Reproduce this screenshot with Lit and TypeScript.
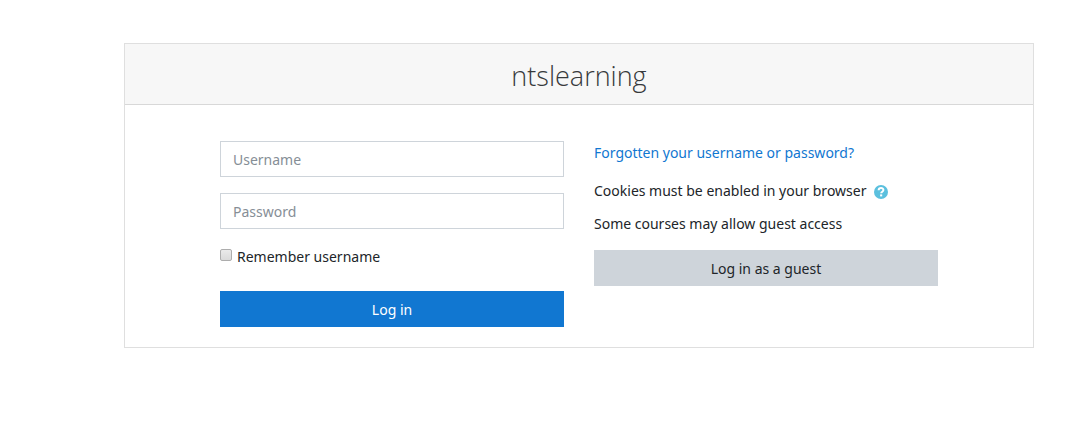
import { LitElement, html, css } from "lit";
import { customElement } from "lit/decorators.js";

@customElement("app-root")
export class AppRoot extends LitElement {
  static styles = css`
    :host { display: block; padding: 43px 43px 40px 124px; color: #212529; background: #fff;
      font: 14px/23px "Noto Sans", "Open Sans", sans-serif; }
    * { box-sizing: border-box; }
    .card { border: 1px solid #dfdfdf; background: #fff; }
    .title { margin: 0; height: 61px; display: flex; align-items: center; justify-content: center;
      background: #f7f7f7; border-bottom: 1px solid #d8d8d8; color: #373a3c;
      font-family: "Open Sans", sans-serif; font-size: 27px; line-height: 36px; font-weight: 300; padding-top: 3px; }
    .body { display: grid; grid-template-columns: 1fr 1fr; gap: 30px; padding: 36px 95px 20px; }
    .login { display: flex; flex-direction: column; gap: 16px; }
    input, button { font: inherit; border-radius: 0; margin: 0; }
    .field { width: 100%; height: 36px; border: 1px solid #ced4da; padding: 6px 12px; color: #495057; background: #fff; }
    .field::placeholder { color: #868e96; opacity: 1; }
    .remember { display: flex; align-items: center; gap: 5px; margin-bottom: 7px; }
    .check { appearance: none; width: 12px; height: 12px; margin-bottom: 3px; border: 1px solid #adadad; border-radius: 2px;
      background: linear-gradient(#eaeaea, #dadada); }
    .check:checked { background: #1177d1; }
    .btn { display: block; width: 100%; height: 36px; border: 0; padding: 0; cursor: pointer; }
    .primary { background: #1177d1; color: #fff; }
    .secondary { background: #ced4da; color: #212529; }
    a { color: #1177d1; text-decoration: none; }
    p { margin: 0; }
    .cookies { display: flex; align-items: center; gap: 8px; margin: 15px 0 10px; }
    .help { height: 14px; border: 0; padding: 0; margin-top: 2px; background: none; cursor: pointer; display: block; }
    .help svg { display: block; }
    .guest { margin-top: 15px; }
  `;
  render() {
    return html`<main class="card">
      <h1 class="title">ntslearning</h1>
      <div class="body">
        <form class="login" @submit=${(e: Event) => e.preventDefault()}>
          <input class="field" type="text" placeholder="Username" aria-label="Username">
          <input class="field" type="password" placeholder="Password" aria-label="Password">
          <label class="remember"><input class="check" type="checkbox">Remember username</label>
          <button class="btn primary" type="submit">Log in</button>
        </form>
        <section>
          <a href="#">Forgotten your username or password?</a>
          <div class="cookies"><span>Cookies must be enabled in your browser</span>
            <button class="help" type="button" aria-label="Help with cookies"><svg width="14" height="14" viewBox="0 0 14 14"><circle cx="7" cy="7" r="7" fill="#5bc0de"/><path d="M4.6 5.2C4.8 2.3 9.4 2.3 9.4 5c0 1.8-2.2 1.6-2.2 3.2" fill="none" stroke="#fff" stroke-width="2"/><path d="M6.1 9.4h2.1v2H6.1z" fill="#fff"/></svg></button></div>
          <p>Some courses may allow guest access</p>
          <button class="btn secondary guest" type="button">Log in as a guest</button>
        </section>
      </div>
    </main>`;
  }
}
